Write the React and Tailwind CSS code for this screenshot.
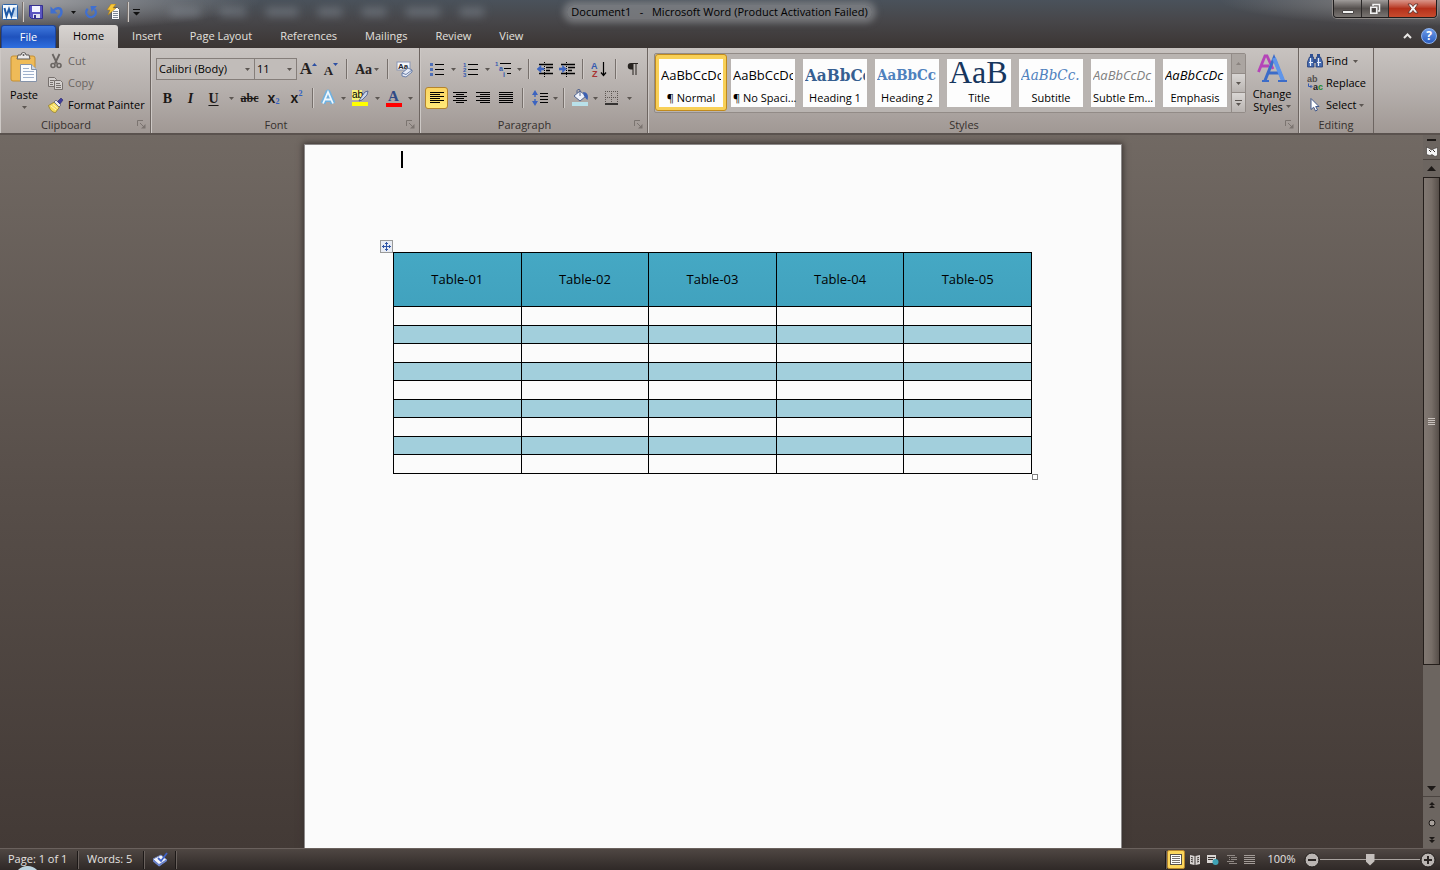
import React, { useState } from 'react'

const tabs = ['Home', 'Insert', 'Page Layout', 'References', 'Mailings', 'Review', 'View']

const styleCards = [
  { name: '¶ Normal', sample: 'AaBbCcDc', look: 'items-center text-[13px] text-black' },
  { name: '¶ No Spaci...', sample: 'AaBbCcDc', look: 'items-center text-[13px] text-black' },
  { name: 'Heading 1', sample: 'AaBbCc', look: "items-center font-['DejaVu_Serif_Condensed','DejaVu_Serif',serif] text-[17px] font-bold text-[#365f91]" },
  { name: 'Heading 2', sample: 'AaBbCc', look: "items-center font-['DejaVu_Serif_Condensed','DejaVu_Serif',serif] text-[15px] font-bold text-[#4f81bd]" },
  { name: 'Title', sample: 'AaB', look: "items-start font-['Liberation_Serif',serif] text-[32px] leading-[20px] text-[#17365d]" },
  { name: 'Subtitle', sample: 'AaBbCc.', look: "items-center font-['DejaVu_Serif_Condensed','DejaVu_Serif',serif] text-[15px] italic text-[#4f81bd]" },
  { name: 'Subtle Em...', sample: 'AaBbCcDc', look: 'items-center text-[13px] italic text-[#808080]' },
  { name: 'Emphasis', sample: 'AaBbCcDc', look: 'items-center text-[13px] italic text-black' },
]

const columns = ['Table-01', 'Table-02', 'Table-03', 'Table-04', 'Table-05']
const rows = [1, 2, 3, 4, 5, 6, 7, 8, 9]

const Caret = () => (
  <svg width="5" height="3" viewBox="0 0 5 3" className="shrink-0" aria-hidden="true">
    <path d="M0 0h5L2.500 3z" fill="#5c5652" />
  </svg>
)

const Divider = ({ className = 'w-[9px]' }) => (
  <div className={`flex h-[20px] shrink-0 justify-center ${className}`}>
    <div className="w-px bg-[#77706c]" />
    <div className="w-px bg-[#cfcac7]" />
  </div>
)

const IconButton = ({ label, className = 'w-[23px]', children }) => (
  <button type="button" aria-label={label} className={`flex h-[22px] shrink-0 items-center justify-center ${className}`}>
    {children}
  </button>
)

const MenuButton = ({ label }) => (
  <IconButton label={label} className="w-[8px]"><Caret /></IconButton>
)

// one ribbon group with its caption and optional corner launcher
const Group = ({ title, launcher = true, className, children }) => (
  <section aria-label={title} className={`flex shrink-0 flex-col border-r border-r-[#6d6561] shadow-[inset_1px_0_0_#cdc8c5] ${className}`}>
    <div className="flex-1">{children}</div>
    <div className="flex h-[17px] items-center">
      <span className="flex-1 text-center text-[11px] leading-[16px] text-[#35302d]">{title}</span>
      {launcher && (
        <button type="button" aria-label={`${title} options`} className="flex w-[18px] justify-center">
          <svg width="9" height="9" viewBox="0 0 9 9" fill="none" stroke="#7b7470">
            <path d="M.5 6V.5H6M3 3l4 4" />
            <path d="M4 8.500h4.500V4z" fill="#7b7470" stroke="none" />
          </svg>
        </button>
      )}
    </div>
  </section>
)

const Combo = ({ label, value, className }) => (
  <label className={`relative flex h-[22px] items-center border border-[#857e7a] bg-[#c1bcb9] ${className}`}>
    <select aria-label={label} className="h-full w-full appearance-none bg-transparent pl-[2px] text-[11px] text-black outline-none">
      <option>{value}</option>
    </select>
    <span className="pointer-events-none absolute right-[4px]"><Caret /></span>
  </label>
)

const Lines = ({ list }) => (
  <svg width="16" height="12" viewBox="0 0 16 12" fill="none" stroke="#000">
    {list.map(([x1, x2], i) => <path key={i} d={`M${x1} ${i * 2 + 0.5}H${x2}`} />)}
  </svg>
)

const aligns = [
  { label: 'Align left', list: [[1, 15], [1, 11], [1, 15], [1, 11], [1, 15], [1, 11]] },
  { label: 'Center', list: [[1, 15], [4, 12], [1, 15], [4, 12], [1, 15], [4, 12]] },
  { label: 'Align right', list: [[1, 15], [5, 15], [1, 15], [5, 15], [1, 15], [5, 15]] },
  { label: 'Justify', list: [[1, 15], [1, 15], [1, 15], [1, 15], [1, 15], [1, 15]] },
]

const WordLogo = () => (
  <svg width="16" height="16" viewBox="0 0 16 16">
    <rect x=".5" y=".5" width="15" height="15" rx="1" fill="#f4f8fc" stroke="#2b62a9" />
    <path d="M11 3h4v10h-4z" fill="#bcd3ec" />
    <path d="M2.500 4l2 8L7 5l2.500 7L12 4" fill="none" stroke="#1f5aa8" strokeWidth="2" />
  </svg>
)

const QuickAccess = () => (
  <div className="flex h-[24px] flex-1 items-center pl-[2px]">
    <WordLogo />
    <Divider className="w-[9px]" />
    <button type="button" aria-label="Save" className="flex w-[18px] justify-center">
      <svg width="14" height="14" viewBox="0 0 14 14">
        <path d="M.5.5h13v13h-11l-2-2z" fill="#5a55c0" stroke="#34308f" />
        <path d="M3 1h8v6H3z" fill="#f2f4ff" />
        <path d="M4 9h7v4H4z" fill="#dfe1ef" />
        <path d="M5 10h2v3H5z" fill="#34308f" />
      </svg>
    </button>
    <button type="button" aria-label="Undo" className="flex w-[24px] justify-center">
      <svg width="14" height="14" viewBox="0 0 14 14">
        <path d="M3.500 5.500C6.500 2 11.500 2.500 11.500 7c0 2.500-1.200 4-3.500 5.500" fill="none" stroke="#3f6fd0" strokeWidth="2.400" />
        <path d="M.5 1.500V8.500h7z" fill="#3f6fd0" />
      </svg>
    </button>
    <button type="button" aria-label="Undo history" className="flex w-[8px] justify-center">
      <svg width="5" height="3" viewBox="0 0 5 3"><path d="M0 0h5L2.500 3z" fill="#111" /></svg>
    </button>
    <button type="button" aria-label="Repeat" className="flex w-[28px] justify-center">
      <svg width="14" height="14" viewBox="0 0 14 14">
        <path d="M3.800 3.800a4.800 4.800 0 1 0 6.800.4" fill="none" stroke="#3f6fd0" strokeWidth="2.300" />
        <path d="M6.500 1h6.500l-5.500 6z" fill="#3f6fd0" />
      </svg>
    </button>
    <button type="button" aria-label="Quick print" className="flex w-[17px] justify-center">
      <svg width="15" height="16" viewBox="0 0 15 16" className="shrink-0">
        <path d="M5.500 3.500h6l2 2v10h-8z" fill="#fafafa" stroke="#55585f" />
        <path d="M7 7.500h5M7 9.500h5M7 11.500h5M7 13.500h5" stroke="#7e8796" />
        <path d="M5 0h5L7 4h3l-8 7 2-5H1z" fill="#f9c83a" stroke="#a87a18" strokeWidth=".6" />
      </svg>
    </button>
    <Divider className="w-[11px]" />
    <button type="button" aria-label="Customize toolbar">
      <svg width="7" height="7" viewBox="0 0 7 7"><path d="M0 0h7v1H0zM0 3h7L3.500 6.500z" fill="#111" /></svg>
    </button>
    {/* menu of the window behind, seen through the glass */}
    <div aria-hidden="true" className="ml-[30px] flex gap-[20px] blur-[4px]">
      <div className="h-[8px] w-[30px] bg-[#8c949e]/50" />
      <div className="h-[8px] w-[26px] bg-[#8c949e]/50" />
      <div className="h-[8px] w-[32px] bg-[#8c949e]/50" />
      <div className="h-[8px] w-[24px] bg-[#8c949e]/50" />
      <div className="h-[8px] w-[24px] bg-[#8c949e]/50" />
      <div className="h-[8px] w-[34px] bg-[#8c949e]/50" />
      <div className="h-[8px] w-[24px] bg-[#8c949e]/50" />
    </div>
  </div>
)

const TitleBar = () => (
  <header className="flex h-[24px] shrink-0 items-center">
    <QuickAccess />
    <h1 className="rounded-full bg-[#939497]/60 px-[4px] text-[11px] leading-[14px] whitespace-pre text-black shadow-[0_0_6px_4px_#93949799]">
      Document1   -   Microsoft Word (Product Activation Failed)
    </h1>
    <div className="flex h-[24px] flex-1 items-start justify-end pr-[3px]">
      <div className="flex h-[18px] overflow-hidden rounded-b-[4px] border border-t-0 border-[#1f1d1d] shadow-[0_0_0_1px_#8c8785]">
        <button type="button" aria-label="Minimize" className="flex w-[28px] items-center justify-center border-r border-[#2b2828] bg-linear-to-b from-[#a09c9a] via-[#55504e] to-[#7a7572]">
          <svg width="12" height="12" viewBox="0 0 12 12"><path d="M.5 7.500h11v3H.5z" fill="#f2f2f2" stroke="#494545" /></svg>
        </button>
        <button type="button" aria-label="Restore" className="flex w-[27px] items-center justify-center border-r border-[#2b2828] bg-linear-to-b from-[#a09c9a] via-[#55504e] to-[#7a7572]">
          <svg width="12" height="12" viewBox="0 0 12 12" fill="none">
            <path d="M4 3V1.500h6.500V8H9" stroke="#f2f2f2" strokeWidth="1.500" />
            <path d="M1.800 4.300h6v6h-6z" stroke="#f2f2f2" strokeWidth="1.600" />
            <path d="M3.800 6.300h2v2h-2z" stroke="#3c3837" />
          </svg>
        </button>
        <button type="button" aria-label="Close" className="flex w-[47px] items-center justify-center bg-linear-to-b from-[#d9958a] via-[#b5301a] to-[#c84b2e]">
          <svg width="12" height="11" viewBox="0 0 12 11">
            <path d="M1 1h3l2 2.500L8 1h3L7.800 5.500 11 10H8L6 7.500 4 10H1l3.200-4.500z" fill="#f6f6f6" stroke="#5a2a24" strokeWidth=".8" />
          </svg>
        </button>
      </div>
    </div>
  </header>
)

const TabRow = ({ active, onSelect }) => (
  <nav className="flex h-[24px] shrink-0 items-end pl-px text-[11px]">
    <button type="button" className="mr-[3px] h-[23px] w-[55px] rounded-t-[3px] border border-b-0 border-[#1c449c] bg-linear-to-b from-[#3f77dc] via-[#1f52bd] to-[#2f6fe0] text-white">
      File
    </button>
    {tabs.map((tab) => (
      <button
        key={tab}
        type="button"
        onClick={() => onSelect(tab)}
        className={`h-[23px] rounded-t-[3px] px-[14px] whitespace-nowrap ${tab === active ? 'bg-linear-to-b from-[#d8d4d1] to-[#c6c1be] text-black' : 'text-[#e4e1df]'}`}
      >
        {tab}
      </button>
    ))}
    <div className="flex h-full flex-1 items-center justify-end gap-[9px] pr-[3px]">
      <button type="button" aria-label="Minimize the ribbon">
        <svg width="9" height="6" viewBox="0 0 9 6" fill="none"><path d="M1 5l3.500-3.500L8 5" stroke="#e8e6e4" strokeWidth="2" /></svg>
      </button>
      <button type="button" aria-label="Help" className="h-[16px] w-[16px] rounded-full border border-[#8fb2ec] bg-linear-to-b from-[#6d9be8] to-[#2a5cc0] text-[12px] leading-[14px] font-bold text-white">
        ?
      </button>
    </div>
  </nav>
)

const Clipboard = () => (
  <Group title="Clipboard" className="w-[151px]">
    <div className="flex">
      <button type="button" className="flex w-[48px] flex-col items-center gap-[3px] pt-[4px] text-[11px] text-black">
        <svg width="28" height="32" viewBox="0 0 28 32">
          <rect x="1" y="4" width="24" height="25" rx="2" fill="#efbb58" stroke="#c48f33" />
          <path d="M8 3h3a2.500 2.500 0 0 1 5 0h3l1 4H7z" fill="#eceaea" stroke="#5d5a58" />
          <circle cx="13.500" cy="3" r="1" fill="#5d5a58" />
          <path d="M10.500 12.500h11l5 5v12h-16z" fill="#fbfcfe" stroke="#8593a9" />
          <path d="M21.500 12.500v5h5" fill="#cfd8e6" stroke="#8593a9" />
          <path d="M13 16.500h6M13 19.500h11M13 22.500h11M13 25.500h11" stroke="#9fb1cc" />
        </svg>
        <span className="leading-[16px]">Paste</span>
        <Caret />
      </button>
      <div className="flex flex-col pt-[2px] text-[11px] text-[#6b6561]">
        <button type="button" className="flex h-[22px] items-center gap-[4px]">
          <svg width="16" height="16" viewBox="0 0 16 16" fill="none" stroke="#6a6562">
            <path d="M4.500 1L9 10.500M11.500 1L7 10.500" strokeWidth="1.800" />
            <circle cx="5" cy="12.500" r="2" strokeWidth="1.600" />
            <circle cx="11" cy="12.500" r="2" strokeWidth="1.600" />
          </svg>
          Cut
        </button>
        <button type="button" className="flex h-[22px] items-center gap-[4px]">
          <svg width="16" height="16" viewBox="0 0 16 16" fill="#d4d0ce" stroke="#77716e">
            <path d="M.5 2.500h6l2 2v7h-8z" />
            <path d="M2 5.500h4M2 7.500h3M2 9.500h3" />
            <path d="M6.500 5.500h6l2 2v7h-8z" />
            <path d="M8 8.500h4M8 10.500h5M8 12.500h5" />
          </svg>
          Copy
        </button>
        <button type="button" className="flex h-[22px] items-center gap-[4px] text-black">
          <svg width="16" height="16" viewBox="0 0 16 16">
            <path d="M.5 8.500l6-3.500 5 5-4 5.500c-3 0-5.500-2.500-7-7z" fill="#f5dc5c" stroke="#8f7a2a" strokeWidth=".8" />
            <path d="M3 9l5 4M5 7.500l5 4" stroke="#fff6c0" />
            <path d="M6 5l2-2 5 5-2 2z" fill="#e9e9ef" stroke="#626270" strokeWidth=".8" />
            <path d="M9.500 4.500l3.500-3.500 2 2-3 4z" fill="#3f3d9c" stroke="#2a2870" strokeWidth=".6" />
          </svg>
          Format Painter
        </button>
      </div>
    </div>
  </Group>
)

const FontGroup = () => (
  <Group title="Font" className="w-[269px]">
    <div className="flex flex-col gap-[7px] pt-[10px] pl-[5px]">
      <div className="flex items-center font-['Liberation_Serif',serif] text-[#26221f]">
        <Combo label="Font" value="Calibri (Body)" className="w-[99px] font-['Open_Sans',sans-serif]" />
        <Combo label="Font size" value="11" className="-ml-px w-[43px] font-['Open_Sans',sans-serif]" />
        <IconButton label="Grow font">
          <span className="text-[17px] leading-[20px] font-bold">A</span>
          <svg width="5" height="3" viewBox="0 0 5 3" className="mb-[10px]"><path d="M0 3h5L2.500 0z" fill="#2c4fa3" /></svg>
        </IconButton>
        <IconButton label="Shrink font" className="w-[22px]">
          <span className="pt-[3px] text-[13px] leading-[16px] font-bold">A</span>
          <svg width="5" height="3" viewBox="0 0 5 3" className="mb-[10px]"><path d="M0 0h5L2.500 3z" fill="#2c4fa3" /></svg>
        </IconButton>
        <Divider />
        <IconButton label="Change case" className="w-[32px] gap-[2px]">
          <span className="text-[14px] font-bold">Aa</span>
          <Caret />
        </IconButton>
        <Divider />
        <IconButton label="Clear formatting" className="w-[24px]">
          <svg width="17" height="17" viewBox="0 0 17 17">
            <rect x="1" y="1" width="13" height="8" fill="#f4f6fa" stroke="#8b98b5" />
            <text x="2" y="8" fontSize="8" fontWeight="bold" fontFamily="Liberation Sans" fill="#20242e">Aa</text>
            <path d="M6 12l6-5 4 2v2l-6 5-4-1z" fill="#e6ebf6" stroke="#6b7fa8" />
            <path d="M6 12l4 1.500 6-4.500" fill="none" stroke="#6b7fa8" />
          </svg>
        </IconButton>
      </div>
      <div className="flex items-center font-['Liberation_Serif',serif] text-[14px] font-bold text-[#1b1816]">
        <IconButton label="Bold">B</IconButton>
        <IconButton label="Italic"><span className="italic">I</span></IconButton>
        <IconButton label="Underline"><span className="underline underline-offset-2">U</span></IconButton>
        <IconButton label="Underline style" className="w-[12px]"><Caret /></IconButton>
        <IconButton label="Strikethrough" className="w-[25px]"><span className="text-[12px] line-through">abc</span></IconButton>
        <IconButton label="Subscript">
          <span className="font-['Liberation_Sans',sans-serif]">x</span><span className="pt-[8px] text-[8px] text-[#2f5fc4]">2</span>
        </IconButton>
        <IconButton label="Superscript">
          <span className="font-['Liberation_Sans',sans-serif]">x</span><span className="pb-[8px] text-[8px] text-[#2f5fc4]">2</span>
        </IconButton>
        <Divider />
        <IconButton label="Text effects" className="w-[22px]">
          <svg width="18" height="18" viewBox="0 0 18 18">
            <path d="M4 14.500L9 3l5 11.500M6 10.500h6" fill="none" stroke="#62b3ec" strokeWidth="5" strokeLinejoin="round" opacity=".8" />
            <path d="M4 14.500L9 3l5 11.500M6 10.500h6" fill="none" stroke="#eef8ff" strokeWidth="1.800" />
          </svg>
        </IconButton>
        <MenuButton label="Text effects menu" />
        <IconButton label="Highlight" className="w-[26px]">
          <svg width="18" height="18" viewBox="0 0 18 18">
            <path d="M1 1h10v10H1z" fill="#f8f27a" />
            <text x="1" y="9" fontSize="10" fontFamily="Liberation Sans" fontWeight="normal" fill="#000">ab</text>
            <path d="M9 10l5-7 3-1-1 4-5 5-3 1z" fill="#c9d4ea" stroke="#46588a" strokeWidth=".8" />
            <path d="M1 13h16v4H1z" fill="#ff0" />
          </svg>
        </IconButton>
        <MenuButton label="Highlight color" />
        <IconButton label="Font color" className="w-[25px]">
          <span className="flex w-[16px] flex-col items-center">
            <span className="text-[15px] leading-[14px] text-[#2f4a86]">A</span>
            <span className="h-[4px] w-full bg-[#f00]" />
          </span>
        </IconButton>
        <MenuButton label="Font color menu" />
      </div>
    </div>
  </Group>
)

const IndentIcon = ({ flip }) => (
  <svg width="17" height="15" viewBox="0 0 17 15">
    <path d="M2 2.500h14M9 5.500h7M9 8.500h4M2 11.500h14" stroke="#000" strokeWidth="1.600" />
    <path d="M7.500 0v15" stroke="#000" strokeDasharray="1 1" />
    <path d={flip ? 'M7.500 7L3.500 3.500v2.500H0v2h3.500v2.500z' : 'M0 7l4-3.500v2.500h3v2H4v2.500z'} fill="#3c64c0" stroke="#3c64c0" strokeWidth=".6" />
  </svg>
)

const ParagraphGroup = () => (
  <Group title="Paragraph" className="w-[228px]">
    <div className="flex flex-col gap-[7px] pt-[10px] pl-[5px]">
      <div className="flex items-center">
        <IconButton label="Bullets" className="w-[24px]">
          <svg width="15" height="14" viewBox="0 0 15 14">
            <path d="M5 2.500h9M5 7.500h9M5 12.500h9" stroke="#000" />
            <path d="M0 1h3v3H0zM0 6h3v3H0zM0 11h3v3H0z" fill="#4f70b8" />
          </svg>
        </IconButton>
        <MenuButton label="Bullet library" />
        <IconButton label="Numbering" className="w-[26px]">
          <svg width="15" height="15" viewBox="0 0 15 15">
            <path d="M5 2.500h10M5 7.500h10M5 12.500h10" stroke="#000" />
            <text x="0" y="5" fontSize="6" fontWeight="bold" fontFamily="Liberation Sans" fill="#3459b0">1</text>
            <text x="0" y="10" fontSize="6" fontWeight="bold" fontFamily="Liberation Sans" fill="#3459b0">2</text>
            <text x="0" y="15" fontSize="6" fontWeight="bold" fontFamily="Liberation Sans" fill="#3459b0">3</text>
          </svg>
        </IconButton>
        <MenuButton label="Numbering library" />
        <IconButton label="Multilevel list" className="w-[24px]">
          <svg width="17" height="16" viewBox="0 0 17 16">
            <path d="M5 2.500h11M9 7.500h7M12 12.500h4" stroke="#000" />
            <text x="0" y="5" fontSize="6" fontWeight="bold" fontFamily="Liberation Sans" fill="#3459b0">1</text>
            <text x="4" y="10" fontSize="7" fontWeight="bold" fontFamily="Liberation Sans" fill="#3459b0">a</text>
            <text x="8" y="16" fontSize="7" fontWeight="bold" fontFamily="Liberation Sans" fill="#3459b0">i</text>
          </svg>
        </IconButton>
        <MenuButton label="Multilevel library" />
        <Divider className="w-[11px]" />
        <IconButton label="Decrease indent" className="w-[22px]"><IndentIcon /></IconButton>
        <IconButton label="Increase indent" className="w-[22px]"><IndentIcon flip /></IconButton>
        <Divider />
        <IconButton label="Sort" className="w-[24px]">
          <svg width="16" height="17" viewBox="0 0 16 17">
            <text x="0" y="8" fontSize="9" fontWeight="bold" fontFamily="Liberation Sans" fill="#3459b0">A</text>
            <text x="1" y="16" fontSize="9" fontWeight="bold" fontFamily="Liberation Sans" fill="#a83232">Z</text>
            <path d="M12.500 1v13M10 11.500l2.500 3 2.500-3" fill="none" stroke="#000" strokeWidth="1.200" />
          </svg>
        </IconButton>
        <Divider />
        <IconButton label="Show marks" className="w-[24px]">
          <svg width="11" height="14" viewBox="0 0 11 14">
            <path d="M4 1h7v1H9.500v11h-1V2h-2v11h-1V7.500H4A3.200 3.200 0 0 1 4 1z" fill="#26221f" />
          </svg>
        </IconButton>
      </div>
      <div className="flex items-center">
        {aligns.map((a, i) => (
          <IconButton
            key={a.label}
            label={a.label}
            className={i === 0 ? 'w-[23px] rounded-[3px] border border-[#b5842c] bg-linear-to-b from-[#fbd562] to-[#ffe978]' : 'w-[23px]'}
          >
            <Lines list={a.list} />
          </IconButton>
        ))}
        <Divider className="w-[12px]" />
        <IconButton label="Line spacing" className="w-[22px]">
          <svg width="17" height="16" viewBox="0 0 17 16">
            <path d="M3 4v8" stroke="#3c64c0" strokeWidth="1.400" strokeDasharray="3 2" />
            <path d="M0 5l3-5 3 5zM0 11l3 5 3-5z" fill="#3c64c0" />
            <path d="M8 3.500h8M8 6.500h8M8 9.500h8M8 12.500h8" stroke="#000" />
          </svg>
        </IconButton>
        <MenuButton label="Line spacing menu" />
        <Divider className="w-[10px]" />
        <IconButton label="Shading" className="w-[22px]">
          <svg width="18" height="18" viewBox="0 0 18 18">
            <path d="M3 7l6-5 6 5-6 5z" fill="#eef2fa" stroke="#52648f" />
            <path d="M9 7V1c0-1-3-1-3 1v2" fill="none" stroke="#52648f" />
            <path d="M12 3c4 0 6 3 4.500 8-2-1-2-3-3.500-4z" fill="#3a5fb2" />
            <path d="M1 13h16v4H1z" fill="#b9e1ea" />
          </svg>
        </IconButton>
        <MenuButton label="Shading color" />
        <IconButton label="Borders" className="w-[26px]">
          <svg width="14" height="14" viewBox="0 0 14 14" fill="none" stroke="#5c5652">
            <path d="M0 .5h13M0 6.500h13M.5 0v12M6.500 0v12M12.500 0v12" strokeDasharray="1 1" />
            <path d="M0 13h13" stroke="#000" strokeWidth="1.400" />
          </svg>
        </IconButton>
        <MenuButton label="Border menu" />
      </div>
    </div>
  </Group>
)

const StylesGroup = () => {
  const [selected, setSelected] = useState('¶ Normal')
  return (
    <Group title="Styles" className="min-w-0 flex-1">
      <div className="flex pt-[5px] pl-[6px]">
        <div className="flex h-[60px] rounded-[2px] border border-[#928b87] bg-[#b9b4b1]">
          {styleCards.map((card) => (
            <button
              key={card.name}
              type="button"
              onClick={() => setSelected(card.name)}
              className={`flex h-[57px] w-[72px] items-center justify-center rounded-[3px] ${card.name === selected ? 'border border-[#c08a1e] bg-[#f8d057]' : ''}`}
            >
              <span className="flex h-[48px] w-[64px] flex-col bg-[#fdfdfd] px-[2px] pt-[3px]">
                <span className={`flex h-[28px] w-full overflow-hidden whitespace-nowrap ${card.look}`}>{card.sample}</span>
                <span className="text-center text-[11px] leading-[16px] whitespace-nowrap text-black">{card.name}</span>
              </span>
            </button>
          ))}
          <div className="flex w-[14px] flex-col border-l border-[#928b87]">
            <button type="button" aria-label="Previous styles" className="flex flex-1 items-center justify-center bg-[#aba5a1]">
              <svg width="5" height="3" viewBox="0 0 5 3"><path d="M0 3h5L2.500 0z" fill="#8a837f" /></svg>
            </button>
            <button type="button" aria-label="Next styles" className="flex flex-1 items-center justify-center border-y border-[#928b87] bg-linear-to-b from-[#d9d6d4] to-[#b9b4b1]">
              <Caret />
            </button>
            <button type="button" aria-label="More styles" className="flex flex-1 flex-col items-center justify-center gap-[2px] bg-linear-to-b from-[#d9d6d4] to-[#b9b4b1]">
              <span className="h-px w-[7px] bg-[#5c5652]" />
              <Caret />
            </button>
          </div>
        </div>
        <button type="button" className="flex w-[52px] flex-col items-center gap-[4px] text-[11px] leading-[13px] text-black">
          <svg width="32" height="30" viewBox="0 0 32 30">
            <path d="M2.500 19L9 3h2l6 13M5 13h8" fill="none" stroke="#b545b8" strokeWidth="2.800" />
            <path d="M9 27.500L18 5l9 22.500M12.500 20h11" fill="none" stroke="#3c6cc8" strokeWidth="3" />
            <path d="M18 5l9 22.500" stroke="#5f95ea" strokeWidth="4" />
            <path d="M6 28h7M22 28h9" stroke="#3c6cc8" strokeWidth="2" />
          </svg>
          <span className="flex flex-col items-center">
            Change
            <span className="flex items-center gap-[3px]">Styles <Caret /></span>
          </span>
        </button>
      </div>
    </Group>
  )
}

const EditingGroup = () => (
  <Group title="Editing" launcher={false} className="w-[75px]">
    <div className="flex flex-col pt-[2px] pl-[8px] text-[11px] text-black">
      <button type="button" className="flex h-[22px] items-center gap-[3px]">
        <svg width="16" height="14" viewBox="0 0 16 14">
          <path d="M2.500 3h4l.5 10H.5V8zM9.500 3h4l2 5v5H9z" fill="#4268ae" stroke="#263f78" strokeWidth=".8" />
          <path d="M3 0h3v3H3zM10 0h3v3h-3zM7 5h2v4H7z" fill="#2f4f92" />
          <path d="M2 8.500h4M10 8.500h4M3.500 4v8M11.500 4v8" stroke="#e9effa" strokeWidth="1.200" />
        </svg>
        Find <span className="pl-[2px]"><Caret /></span>
      </button>
      <button type="button" className="flex h-[22px] items-center gap-[3px]">
        <svg width="16" height="16" viewBox="0 0 16 16">
          <text x="0" y="7" fontSize="9" fontWeight="bold" fontFamily="Liberation Sans" fill="#54504e">ab</text>
          <text x="6" y="15" fontSize="9" fontWeight="bold" fontFamily="Liberation Sans" fill="#222">a<tspan fill="#1b8a2a">c</tspan></text>
          <path d="M1.500 8.500v3h3M3.500 10l1.500 1.500L3.500 13" fill="none" stroke="#3459b0" />
        </svg>
        Replace
      </button>
      <button type="button" className="flex h-[22px] items-center gap-[3px]">
        <svg width="16" height="16" viewBox="0 0 16 16">
          <path d="M4 1.500v11l2.700-2.300L8.500 14l2-1-1.800-3.500H12z" fill="#fff" stroke="#40588c" />
        </svg>
        Select <Caret />
      </button>
    </div>
  </Group>
)

const ScrollColumn = () => (
  <div className="flex w-[17px] shrink-0 flex-col items-center bg-[#6c6560]">
    <button type="button" aria-label="Split" className="flex h-[9px] w-full items-center justify-center"><span className="h-[2px] w-[9px] bg-[#1d1917]" /></button>
    <button type="button" aria-label="View ruler" className="flex h-[16px] w-full items-center justify-center border-b border-[#4b4440]">
      <svg width="12" height="11" viewBox="0 0 12 11">
        <path d="M.5 1l3 1.500 2 1.500 3-1.500 3-1v8l-2.500 1-3-2-2 1-3.500-1z" fill="#f5f5f5" stroke="#37322f" strokeWidth=".6" />
        <path d="M3 4l2 2M7 4l2 2" stroke="#37322f" />
      </svg>
    </button>
    <button type="button" aria-label="Scroll up" className="flex h-[17px] w-full items-center justify-center">
      <svg width="9" height="5" viewBox="0 0 9 5"><path d="M0 5h9L4.500 0z" fill="#1d1917" /></svg>
    </button>
    <div className="flex w-full flex-1 flex-col">
      <div className="flex basis-[81%] flex-col items-center justify-center gap-px border border-[#241e1b] bg-linear-to-r from-[#817872] via-[#776e68] to-[#564e49]">
        <span className="h-px w-[7px] bg-[#c9c2bd]" />
        <span className="h-px w-[7px] bg-[#c9c2bd]" />
        <span className="h-px w-[7px] bg-[#c9c2bd]" />
        <span className="h-px w-[7px] bg-[#c9c2bd]" />
      </div>
    </div>
    <button type="button" aria-label="Scroll down" className="flex h-[17px] w-full items-center justify-center border-b border-[#4b4440]">
      <svg width="9" height="5" viewBox="0 0 9 5"><path d="M0 0h9L4.500 5z" fill="#1d1917" /></svg>
    </button>
    <button type="button" aria-label="Previous page" className="flex h-[17px] items-center">
      <svg width="6" height="7" viewBox="0 0 6 7"><path d="M0 3h6L3 0zM0 6h6L3 3z" fill="#1d1917" /></svg>
    </button>
    <button type="button" aria-label="Select browse object" className="flex h-[17px] items-center">
      <svg width="8" height="8" viewBox="0 0 8 8"><circle cx="4" cy="4" r="3" fill="#a8a19c" stroke="#1d1917" /></svg>
    </button>
    <button type="button" aria-label="Next page" className="flex h-[17px] items-center">
      <svg width="6" height="7" viewBox="0 0 6 7"><path d="M0 1h6L3 4zM0 4h6L3 7z" fill="#1d1917" /></svg>
    </button>
  </div>
)

const DocumentPage = () => (
  <div className="h-full w-[818px] border border-b-0 border-[#8d8a8a] bg-[#fbfbfb] pr-[89px] pl-[88px] shadow-[0_0_6px_1px_#3a3330]">
    <div className="ml-[8px] h-[107px] pt-[6px]">
      <div className="h-[17px] w-[2px] bg-black" />
    </div>
    <div className="relative">
      <button type="button" aria-label="Move table" className="absolute -top-[12px] -left-[13px] flex h-[13px] w-[13px] items-center justify-center border border-[#9a9a9a] bg-[#e8ecf4]">
        <svg width="9" height="9" viewBox="0 0 9 9" fill="none" stroke="#2f55a8">
          <path d="M4.500 0v9M0 4.500h9M3 1.500h3M3 7.500h3M1.500 3v3M7.500 3v3" />
        </svg>
      </button>
      <table className="w-full table-fixed border-collapse">
        <thead>
          <tr className="h-[54px] bg-linear-to-b from-[#45a8c4] to-[#41a2be]">
            {columns.map((name) => (
              <th key={name} className="border border-black p-0 text-[13px] font-normal text-black">{name}</th>
            ))}
          </tr>
        </thead>
        <tbody>
          {rows.map((row) => (
            <tr key={row} className="h-[19px] even:h-[18px] even:bg-[#a2cfdc]">
              {columns.map((name) => <td key={name} className="border border-black p-0" />)}
            </tr>
          ))}
        </tbody>
      </table>
      <span className="absolute -right-[6px] -bottom-[6px] h-[6px] w-[6px] border border-[#808080] bg-white" />
    </div>
  </div>
)

const StatusDivider = () => (
  <div className="flex h-[18px]">
    <div className="w-px bg-[#1c1817]" />
    <div className="w-px bg-[#69615d]" />
  </div>
)

const viewLines = '#d8d4d2'

const StatusBar = () => {
  const [zoom, setZoom] = useState(50)
  return (
    <footer className="relative flex h-[22px] shrink-0 items-center overflow-hidden border-t border-[#6a615d] bg-linear-to-b from-[#4f4743] to-[#2f2927] text-[11px] text-[#e6e3e1]">
      <span className="w-[77px] pl-[8px] whitespace-nowrap">Page: 1 of 1</span>
      <StatusDivider />
      <span className="w-[64px] pl-[8px] whitespace-nowrap">Words: 5</span>
      <StatusDivider />
      <button type="button" aria-label="Proofing" className="flex w-[30px] justify-center">
        <svg width="17" height="15" viewBox="0 0 17 15">
          <path d="M1 7l8-4 6 5-8 6z" fill="#f3f5fb" stroke="#7287c4" />
          <path d="M1 7l6 5v2.500L1 9.500zM7 12l8-5v2l-8 5.500z" fill="#6b83ca" />
          <path d="M6 6l3 3 6-8" fill="none" stroke="#3f62c8" strokeWidth="1.800" />
        </svg>
      </button>
      <StatusDivider />
      <div className="absolute top-[17px] left-[15px] h-[24px] w-[25px] rounded-full bg-[#bcd3de]" />
      <div className="flex flex-1 items-center justify-end pr-[4px]">
        <StatusDivider />
        <button type="button" aria-label="Print layout" className="flex h-[19px] w-[18px] items-center justify-center rounded-[2px] border border-[#b5842c] bg-[#fbd65c]">
          <svg width="12" height="11" viewBox="0 0 12 11">
            <rect x=".5" y=".5" width="11" height="10" fill="#fff" stroke="#55504c" />
            <path d="M2 2.500h8M2 4.500h8M2 6.500h8M2 8.500h8" stroke="#77726e" />
          </svg>
        </button>
        <button type="button" aria-label="Full screen reading" className="flex w-[19px] justify-center">
          <svg width="12" height="12" viewBox="0 0 12 12">
            <path d="M1 1l4.500 1v9L1 10zM11 1L6.500 2v9l4.500-1z" fill={viewLines} />
            <path d="M2 3.500l2 .5M2 5.500l2 .5M2 7.500l2 .5M10 3.500L8 4M10 5.500L8 6M10 7.500L8 8" stroke="#3a3431" />
          </svg>
        </button>
        <button type="button" aria-label="Web layout" className="flex w-[18px] justify-center">
          <svg width="12" height="12" viewBox="0 0 12 12">
            <path d="M0 1h9v8H0z" fill={viewLines} />
            <path d="M1 3.500h7M1 5.500h5" stroke="#3a3431" />
            <circle cx="8.500" cy="8" r="3" fill="#3fa3b5" />
          </svg>
        </button>
        <button type="button" aria-label="Outline" className="flex w-[18px] justify-center">
          <svg width="11" height="10" viewBox="0 0 11 10" stroke="#8f8884">
            <path d="M1 .5h8M3 2.500h1M5 2.500h6M3 4.500h1M5 4.500h6M1 6.500h7M3 8.500h8" />
          </svg>
        </button>
        <button type="button" aria-label="Draft" className="flex w-[19px] justify-center">
          <svg width="11" height="10" viewBox="0 0 11 10" stroke="#a39c98">
            <path d="M0 .5h11M0 2.500h11M0 4.500h11M0 6.500h11M0 8.500h11" />
          </svg>
        </button>
        <button type="button" className="w-[45px] text-center">100%</button>
        <button type="button" aria-label="Zoom out" className="flex">
          <svg width="16" height="16" viewBox="0 0 16 16">
            <circle cx="8" cy="8" r="7" fill="#bab5b2" stroke="#1f1b19" />
            <path d="M4 8h8" stroke="#2b2624" strokeWidth="2" />
          </svg>
        </button>
        <input
          type="range"
          aria-label="Zoom"
          value={zoom}
          onChange={(e) => setZoom(e.target.value)}
          className="h-[16px] w-[100px] appearance-none bg-[linear-gradient(#a9a39f,#a9a39f)] bg-[length:100%_1px] bg-center bg-no-repeat [&::-webkit-slider-thumb]:h-[12px] [&::-webkit-slider-thumb]:w-[9px] [&::-webkit-slider-thumb]:appearance-none [&::-webkit-slider-thumb]:bg-[#c4bfbc] [&::-webkit-slider-thumb]:[clip-path:polygon(0_0,100%_0,100%_65%,50%_100%,0_65%)]"
        />
        <button type="button" aria-label="Zoom in" className="flex">
          <svg width="16" height="16" viewBox="0 0 16 16">
            <circle cx="8" cy="8" r="7" fill="#bab5b2" stroke="#1f1b19" />
            <path d="M4 8h8M8 4v8" stroke="#2b2624" strokeWidth="2" />
          </svg>
        </button>
      </div>
    </footer>
  )
}

const App = () => {
  const [activeTab, setActiveTab] = useState('Home')

  return (
    <div className="flex h-screen flex-col overflow-hidden font-['Open_Sans','Noto_Sans',sans-serif] text-[11px]">
      <div className="bg-[radial-gradient(ellipse_260px_32px_at_0_0,#aaaaad,transparent),radial-gradient(ellipse_220px_26px_at_100%_0,#8f8b8a,transparent),linear-gradient(to_bottom,#4a525b,#474649_45%,#3b3533)]">
        <TitleBar />
        <TabRow active={activeTab} onSelect={setActiveTab} />
      </div>

      {/* Ribbon */}
      <div className="flex h-[87px] shrink-0 border-b-2 border-[#5a524e] bg-linear-to-b from-[#c8c3c0] via-[#b5afac] to-[#a09894]">
        <Clipboard />
        <FontGroup />
        <ParagraphGroup />
        <StylesGroup />
        <EditingGroup />
        <div className="w-[66px] shrink-0" />
      </div>

      {/* Document area */}
      <div className="flex min-h-0 flex-1">
        <main className="flex min-w-0 flex-1 justify-center overflow-hidden bg-linear-to-b from-[#716963] via-[#574e49] to-[#433a36] pt-[9px] pl-[3px]">
          <DocumentPage />
        </main>
        <ScrollColumn />
      </div>

      <StatusBar />
    </div>
  )
}

export default App
